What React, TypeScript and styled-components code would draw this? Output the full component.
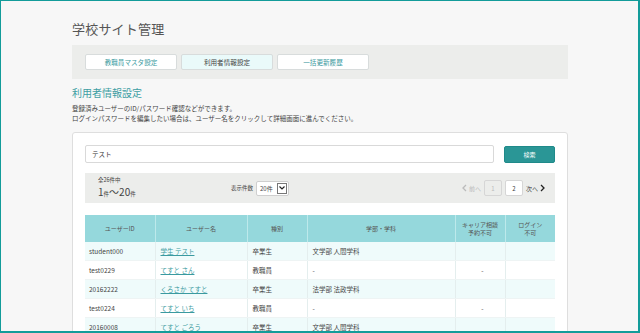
import styled, { createGlobalStyle } from 'styled-components';

const GlobalStyle = createGlobalStyle`
  html, body {
    margin: 0;
    padding: 0;
    background: #f7f7f7;
  }
  body {
    font-family: "Noto Sans CJK JP", "Noto Sans", sans-serif;
    color: #444;
  }
`;

const Frame = styled.div`
  box-sizing: border-box;
  width: 640px;
  height: 333px;
  overflow: hidden;
  background: #f7f7f7;
  border: 1px solid #139c9a;
  border-right-width: 2px;
  border-bottom-width: 2px;
  padding: 0 70px 0 71px;
`;

const Title = styled.h1`
  margin: 19px 0 0;
  font-size: 13px;
  font-weight: 400;
  color: #555;
  line-height: 18px;
  letter-spacing: 0.2px;
`;

const TabBar = styled.nav`
  margin-top: 7px;
  height: 34px;
  background: #ecedeb;
  display: flex;
  align-items: center;
  gap: 4px;
  padding: 0 13px;
`;

const Tab = styled.div<{ active?: boolean }>`
  box-sizing: border-box;
  width: 92px;
  height: 16px;
  border: 1px solid #d8dcdc;
  border-radius: 2px;
  background: ${({ active }) => (active ? '#eafafa' : '#fff')};
  color: ${({ active }) => (active ? '#444' : '#3a9aa0')};
  font-size: 6.6px;
  display: flex;
  align-items: center;
  justify-content: center;
`;

const Heading = styled.h2`
  margin: 7px 0 0;
  font-size: 10px;
  font-weight: 400;
  color: #3d9ea3;
  line-height: 13px;
`;

const Lead = styled.p`
  margin: 5px 0 0;
  font-size: 6.5px;
  line-height: 9.5px;
  color: #444;
`;

const Card = styled.section`
  margin-top: 9px;
  background: #fff;
  border: 1px solid #dedede;
  border-radius: 3px;
  padding: 12px 12px 0;
  height: 220px;
`;

const SearchRow = styled.div`
  display: flex;
  gap: 10px;
  align-items: center;
`;

const SearchInput = styled.div`
  box-sizing: border-box;
  flex: 1;
  height: 18px;
  border: 1px solid #d9d9d9;
  border-radius: 2px;
  font-size: 6.5px;
  display: flex;
  align-items: center;
  padding-left: 6px;
  color: #333;
`;

const SearchButton = styled.button`
  box-sizing: border-box;
  width: 51px;
  height: 17px;
  border: 1px solid #1f8a8a;
  border-radius: 2px;
  background: #2a9696;
  color: #fff;
  font-family: inherit;
  font-size: 6px;
  padding: 0;
`;

const InfoBar = styled.div`
  margin-top: 10px;
  height: 30px;
  background: #ecedeb;
  display: grid;
  grid-template-columns: 133px 1fr auto;
  align-items: center;
  padding: 0 10px 0 13px;
`;

const Count = styled.div`
  display: flex;
  flex-direction: column;
  gap: 2px;
  color: #444;
`;

const CountSmall = styled.span`
  font-size: 5.5px;
  line-height: 7px;
`;

const CountBig = styled.span`
  font-size: 10px;
  line-height: 11px;
  small {
    font-size: 5.5px;
  }
`;

const PerPage = styled.div`
  display: flex;
  align-items: center;
  gap: 3px;
  font-size: 5.5px;
`;

const Select = styled.div`
  box-sizing: border-box;
  height: 15px;
  width: 33px;
  border: 1px solid #cfcfcf;
  background: #fff;
  border-radius: 2px;
  display: flex;
  align-items: center;
  justify-content: space-between;
  padding: 0 1px 0 3px;
  font-size: 6px;
`;

const SelectArrow = styled.span`
  box-sizing: border-box;
  width: 10px;
  height: 11px;
  border: 1px solid #777;
  display: flex;
  align-items: center;
  justify-content: center;
`;

const Pager = styled.div`
  display: flex;
  align-items: center;
  gap: 3px;
  font-size: 6px;
`;

const PagerLink = styled.span<{ disabled?: boolean }>`
  display: flex;
  align-items: center;
  gap: 2px;
  color: ${({ disabled }) => (disabled ? '#bbb' : '#444')};
`;

const PageBox = styled.span<{ current?: boolean }>`
  box-sizing: border-box;
  width: 18px;
  height: 16px;
  border: 1px solid #d6d6d6;
  border-radius: 2px;
  display: flex;
  align-items: center;
  justify-content: center;
  background: ${({ current }) => (current ? '#ecedeb' : '#fff')};
  color: ${({ current }) => (current ? '#bbb' : '#444')};
`;

const Table = styled.table`
  margin-top: 12px;
  width: 470px;
  border-collapse: collapse;
  table-layout: fixed;
  font-size: 6.5px;
`;

const Th = styled.th`
  height: 27px;
  background: #95d8dc;
  color: #555;
  font-weight: 400;
  font-size: 6px;
  line-height: 8px;
  border-left: 1px solid #bde9eb;
  padding: 0;
  &:first-child {
    border-left: none;
  }
`;

const Tr = styled.tr<{ tint: boolean }>`
  background: ${({ tint }) => (tint ? '#effbfb' : '#fff')};
`;

const Td = styled.td<{ center?: boolean }>`
  height: 18px;
  padding: 0 0 0 5px;
  border-left: 1px solid #e4eeee;
  border-bottom: 1px solid #eef4f4;
  color: #444;
  text-align: ${({ center }) => (center ? 'center' : 'left')};
  white-space: nowrap;
  overflow: hidden;
  &:first-child {
    border-left: none;
    padding-left: 4px;
  }
`;

const NameLink = styled.a`
  color: #3a9aa0;
  text-decoration: underline;
`;

const Chevron = ({ dir, color }: { dir: 'l' | 'r'; color: string }) => (
  <svg width="5" height="8" viewBox="0 0 5 8">
    <path
      d={dir === 'l' ? 'M4 1 L1 4 L4 7' : 'M1 1 L4 4 L1 7'}
      fill="none"
      stroke={color}
      strokeWidth="1.3"
    />
  </svg>
);

const columns = [
  { label: 'ユーザーID', w: 70 },
  { label: 'ユーザー名', w: 92 },
  { label: '種別', w: 60 },
  { label: '学部・学科', w: 148 },
  { label: 'キャリア相談\n予約不可', w: 50 },
  { label: 'ログイン\n不可', w: 50 },
];

const users = [
  { id: 'student000', name: '学生 テスト', kind: '卒業生', dept: '文学部 人間学科', career: '' },
  { id: 'test0229', name: 'てすと さん', kind: '教職員', dept: '-', career: '-' },
  { id: '20162222', name: 'くろさか てすと', kind: '卒業生', dept: '法学部 法政学科', career: '' },
  { id: 'test0224', name: 'てすと いち', kind: '教職員', dept: '-', career: '-' },
  { id: '20160008', name: 'てすと ごろう', kind: '卒業生', dept: '文学部 人間学科', career: '' },
];

export default function App() {
  return (
    <>
      <GlobalStyle />
      <Frame>
        <Title>学校サイト管理</Title>
        <TabBar>
          <Tab>教職員マスタ設定</Tab>
          <Tab active>利用者情報設定</Tab>
          <Tab>一括更新履歴</Tab>
        </TabBar>
        <Heading>利用者情報設定</Heading>
        <Lead>
          登録済みユーザーのID/パスワード確認などができます。
          <br />
          ログインパスワードを編集したい場合は、ユーザー名をクリックして詳細画面に進んでください。
        </Lead>
        <Card>
          <SearchRow>
            <SearchInput>テスト</SearchInput>
            <SearchButton>検索</SearchButton>
          </SearchRow>
          <InfoBar>
            <Count>
              <CountSmall>全26件中</CountSmall>
              <CountBig>
                1<small>件</small>～20<small>件</small>
              </CountBig>
            </Count>
            <PerPage>
              表示件数
              <Select>
                20件
                <SelectArrow>
                  <svg width="6" height="4" viewBox="0 0 6 4">
                    <path d="M0.5 0.5 L3 3 L5.5 0.5" fill="none" stroke="#222" strokeWidth="1.2" />
                  </svg>
                </SelectArrow>
              </Select>
            </PerPage>
            <Pager>
              <PagerLink disabled>
                <Chevron dir="l" color="#bbb" />
                前へ
              </PagerLink>
              <PageBox current>1</PageBox>
              <PageBox>2</PageBox>
              <PagerLink>
                次へ
                <Chevron dir="r" color="#222" />
              </PagerLink>
            </Pager>
          </InfoBar>
          <Table>
            <colgroup>
              {columns.map(c => (
                <col key={c.label} style={{ width: c.w }} />
              ))}
            </colgroup>
            <thead>
              <tr>
                {columns.map(c => (
                  <Th key={c.label}>
                    {c.label.split('\n').map((line, i) => (
                      <div key={i}>{line}</div>
                    ))}
                  </Th>
                ))}
              </tr>
            </thead>
            <tbody>
              {users.map((u, i) => (
                <Tr key={u.id} tint={i % 2 === 0}>
                  <Td>{u.id}</Td>
                  <Td>
                    <NameLink href="#">{u.name}</NameLink>
                  </Td>
                  <Td>{u.kind}</Td>
                  <Td>{u.dept}</Td>
                  <Td center>{u.career}</Td>
                  <Td center></Td>
                </Tr>
              ))}
            </tbody>
          </Table>
        </Card>
      </Frame>
    </>
  );
}
